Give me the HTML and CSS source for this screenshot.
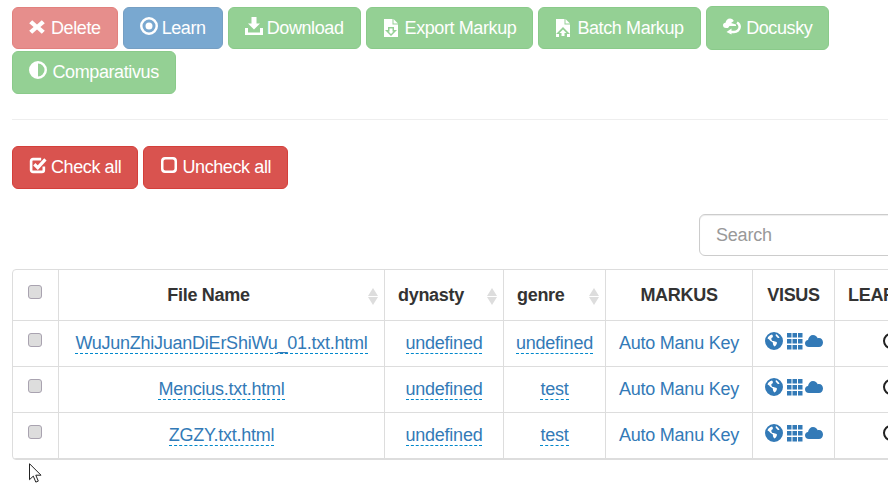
FILE: index.html
```html
<!DOCTYPE html>
<html lang="en">
<head>
    <meta charset="UTF-8">
    <meta name="viewport" content="width=device-width, initial-scale=1.0">
    <title>Document List</title>
    <link rel="stylesheet" href="styles.css">
</head>
<body>

    <div class="toolbar">
        <button class="btn btn-danger faded">
            <svg class="icon" viewBox="0 0 16 16"><path d="M3.2 1.2 8 5.600l4.800-4.400 3 3L11.400 8l4.400 3.800-3 3L8 10.400l-4.800 4.400-3-3L4.600 8 .2 4.200z"/></svg>Delete
        </button>
        <button class="btn btn-primary faded">
            <svg class="icon icon-wide" viewBox="0 0 18 18"><path fill-rule="evenodd" d="M9 0a9 9 0 1 1 0 18A9 9 0 0 1 9 0zm0 2.500a6.500 6.500 0 1 0 0 13 6.500 6.500 0 0 0 0-13zM9 5.500a3.500 3.500 0 1 1 0 7 3.500 3.500 0 0 1 0-7z"/></svg>Learn
        </button>
        <button class="btn btn-success faded">
            <svg class="icon icon-wide" viewBox="0 0 18 18"><path d="M6.500 0h5v6.500H15L9 12.500 3 6.500h3.500zM0 11h3v4.500h12V11h3v7H0z"/></svg>Download
        </button>
        <button class="btn btn-success faded">
            <svg class="icon icon-file" viewBox="0 0 16 18"><path fill-rule="evenodd" d="M1 0h8.500v5.500H15V18H1zM5 8h6v3h3l-6 6-6-6h3zM6.500 9.500v3h-1L8 15l2.500-2.500h-1v-3z"/><path d="M10.500 0 15 4.500h-4.500z"/></svg>Export Markup
        </button>
        <button class="btn btn-success faded">
            <svg class="icon icon-file" viewBox="0 0 16 18"><path fill-rule="evenodd" d="M1 0h8.500v5.500H15V18H1zM8 8l7 7h-3v3H4v-3H1zM8 10.500 4.500 14h2v3h3v-3h2z"/><path d="M10.500 0 15 4.500h-4.500z"/></svg>Batch Markup
        </button>
        <button class="btn btn-success faded btn-tall">
            <svg class="icon icon-wide icon-spaced" viewBox="0 0 18 17"><path d="M3 10.500C1 10.500 0 9.300 0 7.800 0 6.300 1 5.300 2.500 5.300 3 2.800 4.500 1 7 1c1.800 0 3.200 1 3.800 2.500L8 5.500l5 1.500v1.500H6.500L5 10.500z"/><path d="M7.500 14.500H11c3 0 5.700-2.300 5.700-5.200 0-2-1-3.300-2.700-4.300" fill="none" stroke="#fff" stroke-width="2.500"/><path d="M8.500 11 3.500 14.500 8.500 17z"/></svg>Docusky
        </button>
        <button class="btn btn-success faded btn-mid">
            <svg class="icon icon-wide icon-spaced" viewBox="0 0 18 18"><path fill-rule="evenodd" d="M9 0a9 9 0 1 1 0 18A9 9 0 0 1 9 0zm0 2.500v13a6.500 6.500 0 0 0 0-13z"/></svg>Comparativus
        </button>
    </div>

    <hr class="divider">

    <div class="toolbar">
        <button class="btn btn-danger btn-mid">
            <svg class="icon icon-wide" viewBox="0 0 17 17"><path d="M14 10v3.200c0 1.100-.7 1.800-1.800 1.800H3.800C2.700 15 2 14.300 2 13.200V4.800C2 3.700 2.700 3 3.800 3h7.700" fill="none" stroke="#fff" stroke-width="2.500"/><path d="M5 7.800 8.300 11 15.500 3.200" fill="none" stroke="#fff" stroke-width="3"/></svg>Check all
        </button>
        <button class="btn btn-danger btn-mid">
            <svg class="icon icon-wide" viewBox="0 0 18 18"><path fill-rule="evenodd" d="M5 1h8c2.500 0 4 1.500 4 4v8c0 2.500-1.500 4-4 4H5c-2.500 0-4-1.500-4-4V5c0-2.500 1.500-4 4-4zm.5 2.500c-1.200 0-2 .8-2 2v7c0 1.200.8 2 2 2h7c1.200 0 2-.8 2-2v-7c0-1.200-.8-2-2-2z"/></svg>Uncheck all
        </button>
    </div>

    <div class="search-row">
        <input class="search" type="text" placeholder="Search">
    </div>

    <div class="table-box">
        <table>
            <colgroup>
                <col class="col-check"><col class="col-file"><col class="col-dynasty"><col class="col-genre">
                <col class="col-markus"><col class="col-visus"><col class="col-learn">
            </colgroup>
            <thead>
                <tr>
                    <th class="check-cell"><input class="check" type="checkbox"></th>
                    <th class="sortable file-head">File Name<span class="sort"></span></th>
                    <th class="sortable left">dynasty<span class="sort"></span></th>
                    <th class="sortable left">genre<span class="sort"></span></th>
                    <th>MARKUS</th>
                    <th>VISUS</th>
                    <th class="left">LEARN</th>
                </tr>
            </thead>
            <tbody>
                <tr>
                    <td class="check-cell"><input class="check" type="checkbox"></td>
                    <td><a class="editable" href="#">WuJunZhiJuanDiErShiWu_01.txt.html</a></td>
                    <td><a class="editable" href="#">undefined</a></td>
                    <td><a class="editable" href="#">undefined</a></td>
                    <td><a href="#">Auto</a> <a href="#">Manu</a> <a href="#">Key</a></td>
                    <td>
                        <span class="visus">
                            <svg class="vis-icon" viewBox="0 0 18 18"><use href="#globe"/></svg>
                            <svg class="vis-icon" viewBox="0 0 18 18"><use href="#grid"/></svg>
                            <svg class="vis-icon" viewBox="0 0 18 18"><use href="#cloud"/></svg>
                        </span>
                    </td>
                    <td class="learn"><span class="ring"></span></td>
                </tr>
                <tr>
                    <td class="check-cell"><input class="check" type="checkbox"></td>
                    <td><a class="editable" href="#">Mencius.txt.html</a></td>
                    <td><a class="editable" href="#">undefined</a></td>
                    <td><a class="editable" href="#">test</a></td>
                    <td><a href="#">Auto</a> <a href="#">Manu</a> <a href="#">Key</a></td>
                    <td>
                        <span class="visus">
                            <svg class="vis-icon" viewBox="0 0 18 18"><use href="#globe"/></svg>
                            <svg class="vis-icon" viewBox="0 0 18 18"><use href="#grid"/></svg>
                            <svg class="vis-icon" viewBox="0 0 18 18"><use href="#cloud"/></svg>
                        </span>
                    </td>
                    <td class="learn"><span class="ring"></span></td>
                </tr>
                <tr>
                    <td class="check-cell"><input class="check" type="checkbox"></td>
                    <td><a class="editable" href="#">ZGZY.txt.html</a></td>
                    <td><a class="editable" href="#">undefined</a></td>
                    <td><a class="editable" href="#">test</a></td>
                    <td><a href="#">Auto</a> <a href="#">Manu</a> <a href="#">Key</a></td>
                    <td>
                        <span class="visus">
                            <svg class="vis-icon" viewBox="0 0 18 18"><use href="#globe"/></svg>
                            <svg class="vis-icon" viewBox="0 0 18 18"><use href="#grid"/></svg>
                            <svg class="vis-icon" viewBox="0 0 18 18"><use href="#cloud"/></svg>
                        </span>
                    </td>
                    <td class="learn"><span class="ring"></span></td>
                </tr>
            </tbody>
        </table>
    </div>

    <!-- shared icons for the VISUS column -->
    <svg class="defs" aria-hidden="true">
        <defs>
            <path id="globe" fill-rule="evenodd" d="M9 0a9 9 0 1 1 0 18A9 9 0 0 1 9 0zM7 2.500C5 3 3 4.500 2.500 6.500 4 7 4.500 8 5.500 9c1 .5 2 1 2.500 2-.5 1 .5 2.500 1.500 3.500 1-.5 2.500-2.500 2.500-4-1-1-3-1.500-4.500-1.500C6.500 8 6 7 6.500 6 8 5.500 8.500 4 7 2.500zM11 2c-.5 1-.5 2 .5 2.500.5 1 1.500 1.500 3 1.500C14 4.500 12.500 2.500 11 2z"/>
            <path id="grid" d="M1 1h4.500v4.500H1zM6.500 1H11v4.500H6.500zM12 1h4.500v4.500H12zM1 7h4.500v4.500H1zM6.500 7H11v4.500H6.500zM12 7h4.500v4.500H12zM1 13h4.500v4.500H1zM6.500 13H11v4.500H6.500zM12 13h4.500v4.500H12z"/>
            <path id="cloud" d="M4 15c-2.500 0-4-1.500-4-3.700C0 9.300 1.500 8 3 8c.5-3 2.500-5 5-5 2.200 0 4 1.300 4.700 3.300.4-.1.8-.2 1.300-.2 2.300 0 4 2 4 4.400 0 2.500-1.700 4.500-4 4.500z"/>
        </defs>
    </svg>

    <svg class="pointer" viewBox="0 0 13 20"><path d="M.5.700v16l3.800-3.600 2.500 6 2.500-1-2.500-5.900h5.200z" fill="#fff" stroke="#222" stroke-width="1"/></svg>

</body>
</html>
```

FILE: styles.css
```css
html { overflow: hidden; }
body { margin: 0; padding: 6px 0 0 12px; width: 876px; height: 479px; overflow: hidden; position: relative; font-family: "Liberation Sans", Arial, sans-serif; font-size: 18px; color: #333; }

.toolbar { display: flex; flex-wrap: wrap; align-items: center; gap: 1px 5px; }

.btn { display: block; padding: 8px 16px; border: 1px solid transparent; border-radius: 6px; font-family: inherit; font-size: 18px; line-height: 24px; letter-spacing: -.4px; color: #fff; white-space: nowrap; }
.btn-mid { line-height: 25px; }
.btn-tall { line-height: 26px; }
.btn-danger { background-color: #d9534f; border-color: #d43f3a; }
.btn-primary { background-color: #337ab7; border-color: #2e6da4; }
.btn-success { background-color: #5cb85c; border-color: #4cae4c; }
.faded { opacity: .65; }

.icon { width: 16px; height: 16px; margin-right: 6px; vertical-align: -1px; fill: #fff; }
.icon-wide { width: 18px; height: 18px; margin-right: 4px; vertical-align: -1px; }
.icon-spaced { margin-right: 5.500px; }
.icon-file { width: 16px; height: 18px; margin-right: 6px; vertical-align: -3px; }

.divider { width: 876px; margin: 25px 0 26px; border: 0; border-top: 1px solid #eee; }

.search-row { width: 1000px; margin-top: 25px; display: flex; justify-content: flex-end; }
.search { width: 313px; height: 42px; box-sizing: border-box; padding: 10px 16px; border: 1px solid #ccc; border-radius: 6px; font-family: inherit; font-size: 18px; letter-spacing: -.2px; color: #555; box-shadow: inset 0 1px 1px rgba(0, 0, 0, .075); }
.search::placeholder { color: #999; opacity: 1; }

.table-box { width: 1000px; margin-top: 13px; border: 1px solid #ddd; border-radius: 4px; box-sizing: border-box; overflow: hidden; }

table { width: 100%; table-layout: fixed; border-collapse: separate; border-spacing: 0; }
.col-check { width: 45px; }
.col-file { width: 326px; }
.col-dynasty { width: 119px; }
.col-genre { width: 102px; }
.col-markus { width: 147px; }
.col-visus { width: 82px; }

th, td { padding: 0 8px; border-left: 1px solid #ddd; text-align: center; white-space: nowrap; }
th:first-child, td:first-child { border-left: 0; }
th { height: 50px; position: relative; font-weight: bold; letter-spacing: -.3px; }
td { height: 45px; border-top: 1px solid #ddd; letter-spacing: -.25px; }
tbody tr:last-child td { border-bottom: 1px solid #ddd; }
th.left { text-align: left; padding-left: 13px; }
th.file-head { padding-right: 34px; }

.check-cell { padding: 0; vertical-align: top; }
.check { appearance: none; display: block; width: 14px; height: 14px; margin: 12px 0 0 15px; box-sizing: border-box; border: 1px solid #a9a3b0; border-radius: 3px; background-color: #ddd; }
th .check { margin-top: 15px; }

a { color: #337ab7; text-decoration: none; }
.editable { border-bottom: 1px dashed #08c; }

.sort { position: absolute; right: 6px; top: 18px; width: 0; height: 0; border-left: 5px solid transparent; border-right: 5px solid transparent; border-bottom: 8px solid #ddd; }
.sort::after { content: ""; position: absolute; left: -5px; top: 9px; width: 0; height: 0; border-left: 5px solid transparent; border-right: 5px solid transparent; border-top: 8px solid #ddd; }

.visus { display: inline-flex; gap: 3px; vertical-align: 1px; }
.vis-icon { width: 18px; height: 18px; fill: #337ab7; }
.vis-icon + .vis-icon + .vis-icon { margin-left: -2px; }

.learn { text-align: left; padding-left: 48px; }
.ring { display: inline-block; width: 16px; height: 16px; box-sizing: border-box; border: 2px solid #222; border-radius: 50%; vertical-align: 1px; }

.defs { position: absolute; width: 0; height: 0; }
.pointer { position: absolute; left: 29px; top: 463px; width: 13px; height: 20px; }
```
